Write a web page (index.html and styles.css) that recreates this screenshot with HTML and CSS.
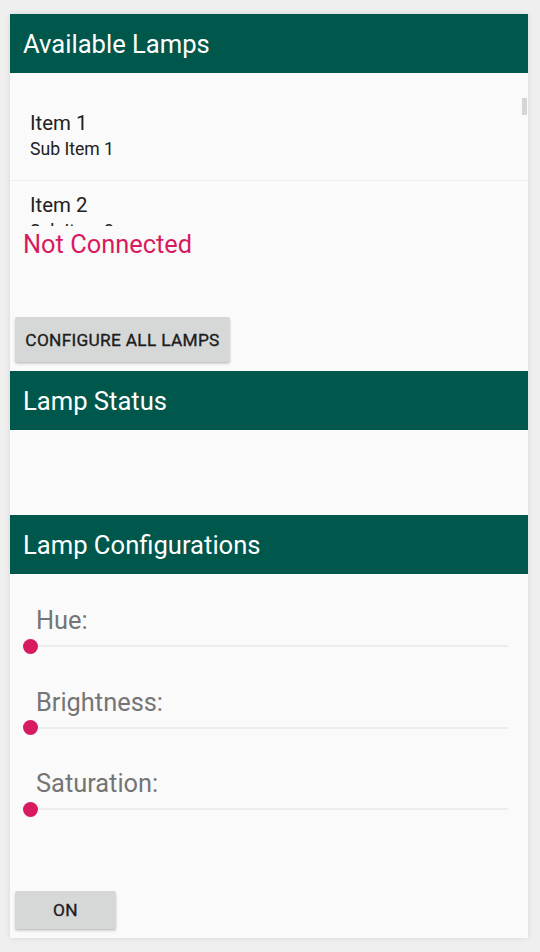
FILE: index.html
```html
<!DOCTYPE html>
<html>
<head>
<meta charset="utf-8">
<link rel="stylesheet" href="styles.css">
</head>
<body>
<div class="card">
  <div class="header">Available Lamps</div>
  <div class="list">
    <div class="item">
      <div class="t1">Item 1</div>
      <div class="t2">Sub Item 1</div>
    </div>
    <div class="item">
      <div class="t1">Item 2</div>
      <div class="t2">Sub Item 2</div>
    </div>
    <div class="thumb"></div>
  </div>
  <div class="status">Not Connected</div>
  <button class="btn btn-config">CONFIGURE ALL LAMPS</button>
  <div class="header">Lamp Status</div>
  <div class="status-area"></div>
  <div class="header">Lamp Configurations</div>
  <div class="config">
    <div class="group">
      <div class="label">Hue:</div>
      <div class="slider"><div class="track"></div><div class="knob"></div></div>
    </div>
    <div class="group">
      <div class="label">Brightness:</div>
      <div class="slider"><div class="track"></div><div class="knob"></div></div>
    </div>
    <div class="group">
      <div class="label">Saturation:</div>
      <div class="slider"><div class="track"></div><div class="knob"></div></div>
    </div>
  </div>
  <button class="btn btn-on">ON</button>
</div>
</body>
</html>
```
FILE: styles.css
```css
* { box-sizing: border-box; }
html, body { margin: 0; padding: 0; }
body {
  background: #efefef;
  font-family: Roboto, "Noto Sans", sans-serif;
  width: 540px;
  height: 952px;
  overflow: hidden;
}
.card {
  margin: 14px 0 0 10px;
  width: 518px;
  height: 924px;
  background: #fafafa;
  box-shadow: 0 0 6px rgba(0,0,0,0.10);
  display: flex;
  flex-direction: column;
  align-items: flex-start;
}
.header {
  width: 100%;
  height: 59px;
  flex: none;
  background: #00574b;
  color: #ffffff;
  font-size: 25.6px;
  line-height: 61px;
  padding-left: 13px;
}
.list {
  position: relative;
  width: 100%;
  height: 153px;
  flex: none;
  overflow: hidden;
  padding-top: 26px;
}
.item {
  height: 82px;
  padding: 11px 0 0 20px;
  border-bottom: 1px solid #efefef;
}
.t1 {
  font-size: 20.4px;
  line-height: 26px;
  color: #212121;
}
.t2 {
  font-size: 17.6px;
  line-height: 26px;
  color: #212121;
}
.thumb {
  position: absolute;
  right: 1px;
  top: 25px;
  width: 5px;
  height: 17px;
  background: #d5d5d5;
}
.status {
  flex: none;
  font-size: 25.4px;
  line-height: 36px;
  color: #d81b60;
  padding-left: 13px;
}
.btn {
  flex: none;
  border: none;
  background: #d6d7d7;
  border-radius: 2px;
  font-family: Roboto, "Noto Sans", sans-serif;
  font-weight: 400;
  font-size: 17.3px;
  color: #1c1c1c;
  -webkit-text-stroke: 0.35px #1c1c1c;
  letter-spacing: 0.3px;
  padding: 0;
  margin-left: 5px;
  box-shadow: 0 2px 3px rgba(0,0,0,0.16), 0 1px 1px rgba(0,0,0,0.08);
}
.btn-config {
  width: 215px;
  height: 45px;
  margin-top: 55px;
  margin-bottom: 9px;
  padding-top: 1px;
}
.status-area {
  flex: none;
  height: 85px;
}
.config {
  flex: none;
  width: 100%;
  padding-top: 31px;
  display: flex;
  flex-direction: column;
  gap: 29.5px;
}
.label {
  font-size: 25.4px;
  line-height: 30px;
  color: #757575;
  padding-left: 26px;
}
.slider {
  position: relative;
  height: 22px;
  margin-left: 20px;
  width: 478px;
}
.track {
  position: absolute;
  left: 0;
  right: 0;
  top: 10px;
  height: 2px;
  background: #ececec;
}
.knob {
  position: absolute;
  left: -7.5px;
  top: 3.5px;
  width: 15px;
  height: 15px;
  border-radius: 50%;
  background: #d81b60;
}
.btn-on {
  width: 101px;
  height: 38px;
  margin-top: 71px;
}
```
